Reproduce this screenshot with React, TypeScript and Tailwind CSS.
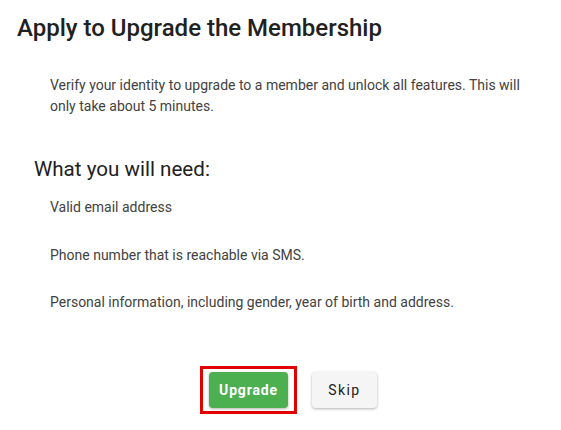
export default function App() {
  const needs = [
    'Valid email address',
    'Phone number that is reachable via SMS.',
    'Personal information, including gender, year of birth and address.',
  ]

  return (
    <div className="h-[430px] w-[561px] bg-white font-['Roboto',sans-serif] text-[#212121]">
      <div className="px-[17px] pt-[12px]">
        <h1 className="text-[24px] font-medium leading-[32px] text-[#212121]">
          Apply to Upgrade the Membership
        </h1>

        <p className="mt-[31px] w-[515px] pl-[33px] text-[14px] leading-[21px] text-[#424242]">
          Verify your identity to upgrade to a member and unlock all features. This will only take
          about 5 minutes.
        </p>

        <h2 className="mt-[38px] pl-[17px] text-[20.6px] leading-[28px] text-[#212121]">
          What you will need:
        </h2>

        <ul className="mt-[14px] flex flex-col gap-[26.5px] pl-[33px] text-[14px] leading-[21px] text-[#424242]">
          {needs.map((item) => (
            <li key={item}>{item}</li>
          ))}
        </ul>
      </div>

      <div className="mt-[53px] flex items-center justify-center gap-[15px] pl-[16px]">
        <div className="border-[3px] border-[#e00000] px-[6px] py-[3px]">
          <button className="h-[36px] rounded-[4px] bg-[#4caf50] px-[10px] text-[14px] font-bold tracking-[0.06em] text-white shadow-[0_1px_3px_rgba(0,0,0,0.3)]">
            Upgrade
          </button>
        </div>
        <button className="h-[36px] w-[65px] rounded-[4px] bg-[#f5f5f5] text-[14px] font-normal tracking-[0.1em] text-[#212121] shadow-[0_1px_3px_rgba(0,0,0,0.3)]">
          Skip
        </button>
      </div>
    </div>
  )
}
